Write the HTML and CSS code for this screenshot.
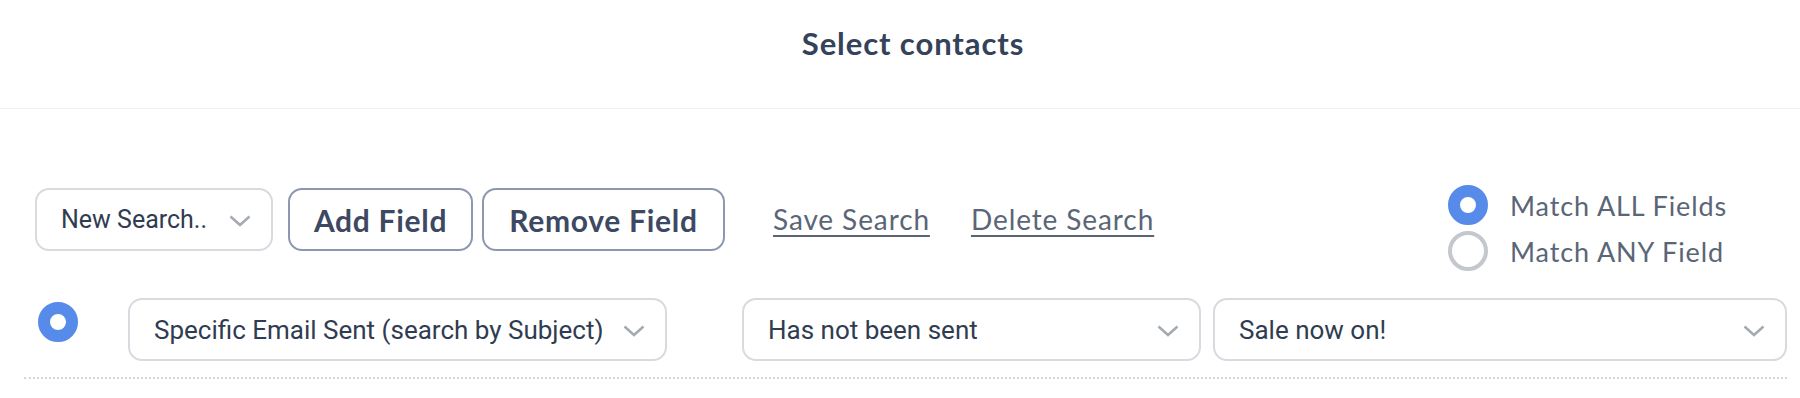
FILE: index.html
```html
<!DOCTYPE html>
<html>
<head>
<meta charset="utf-8">
<link rel="stylesheet" href="styles.css">
</head>
<body>
<div class="header"><h1 class="title">Select contacts</h1></div>
<div class="toolbar">
  <div class="tools">
    <div class="select select-search"><span class="select-text">New Search..</span><svg class="chev" width="22" height="12" viewBox="0 0 22 12"><polyline points="1.5,1.5 11,10 20.5,1.5" fill="none" stroke="#a4aab1" stroke-width="2.5"/></svg></div>
    <button class="btn btn-add">Add Field</button>
    <button class="btn btn-remove">Remove Field</button>
    <a class="link link-save">Save Search</a>
    <a class="link link-delete">Delete Search</a>
  </div>
  <div class="match">
    <div class="match-row"><span class="radio radio-on"></span><span class="match-label">Match ALL Fields</span></div>
    <div class="match-row"><span class="radio radio-off"></span><span class="match-label">Match ANY Field</span></div>
  </div>
</div>
<div class="criteria">
  <span class="radio radio-on row-dot"></span>
  <div class="select sel-field"><span class="select-text">Specific Email Sent (search by Subject)</span><svg class="chev" width="22" height="12" viewBox="0 0 22 12"><polyline points="1.5,1.5 11,10 20.5,1.5" fill="none" stroke="#a4aab1" stroke-width="2.5"/></svg></div>
  <div class="select sel-op"><span class="select-text">Has not been sent</span><svg class="chev" width="22" height="12" viewBox="0 0 22 12"><polyline points="1.5,1.5 11,10 20.5,1.5" fill="none" stroke="#a4aab1" stroke-width="2.5"/></svg></div>
  <div class="select sel-value"><span class="select-text">Sale now on!</span><svg class="chev" width="22" height="12" viewBox="0 0 22 12"><polyline points="1.5,1.5 11,10 20.5,1.5" fill="none" stroke="#a4aab1" stroke-width="2.5"/></svg></div>
</div>
</body>
</html>
```
FILE: styles.css
```css
* { box-sizing: border-box; }
html, body { margin: 0; padding: 0; background: #ffffff; }
body { font-family: Lato, "Open Sans", sans-serif; color: #34425a; width: 1800px; }

.header {
  height: 109px;
  border-bottom: 1px solid #eef1f3;
  display: flex;
  justify-content: center;
  padding-left: 26px;
}
.title {
  margin: 23px 0 0 0;
  font-family: Lato, sans-serif;
  font-weight: 700;
  font-size: 31px;
  line-height: 40px;
  color: #34425a;
  letter-spacing: 0.9px;
}

.toolbar {
  display: flex;
  align-items: flex-start;
  margin-top: 79px;
  padding-left: 35px;
}
.tools { display: flex; align-items: center; }

.select {
  height: 63px;
  border: 2px solid #d7dbe0;
  border-radius: 14px;
  display: flex;
  align-items: center;
  justify-content: space-between;
  padding: 0 20px 0 24px;
  font-family: Roboto, "Liberation Sans", sans-serif;
  font-size: 26px;
  color: #2f3c51;
  background: #fff;
}
.select-text { white-space: nowrap; }
.chev { flex: none; margin-top: 2px; }

.select-search { width: 238px; font-size: 25px; }

.btn {
  height: 63px;
  border: 2px solid #8c98b2;
  border-radius: 14px;
  background: #fff;
  font-family: Lato, sans-serif;
  font-weight: 700;
  font-size: 30px;
  letter-spacing: 0.7px;
  color: #3d4862;
  padding: 0;
}
.btn-add { width: 185px; margin-left: 15px; }
.btn-remove { width: 243px; margin-left: 9px; }

.link {
  font-family: Lato, sans-serif;
  font-size: 28px;
  letter-spacing: 0.9px;
  color: #5a6677;
  text-decoration: underline;
  text-decoration-thickness: 2px;
  text-underline-offset: 5px;
  margin-top: -2px;
}
.link-save { margin-left: 48px; }
.link-delete { margin-left: 41px; }

.match {
  margin-left: auto;
  margin-right: 52px;
  width: 300px;
  margin-top: -3px;
  display: flex;
  flex-direction: column;
  gap: 6px;
}
.match-row { display: flex; align-items: center; height: 40px; }
.match-label {
  margin-left: 22px;
  font-family: Lato, sans-serif;
  font-size: 27px;
  color: #5a6677;
  letter-spacing: 0.9px;
  white-space: nowrap;
}

.radio {
  flex: none;
  width: 40px;
  height: 40px;
  border-radius: 50%;
  display: inline-block;
}
.radio-on { border: 12px solid #578bea; background: #fff; }
.radio-off { border: 4px solid #c4c8cd; background: #fff; }

.criteria {
  display: flex;
  align-items: flex-start;
  margin: 27px 13px 0 24px;
  padding-bottom: 16px;
  border-bottom: 2px dotted #d3d7dc;
}
.row-dot { margin: 4px 0 0 14px; }
.sel-field { width: 539px; margin-left: 50px; }
.sel-op { width: 459px; margin-left: 75px; }
.sel-value { flex: 1; margin-left: 12px; }
```
